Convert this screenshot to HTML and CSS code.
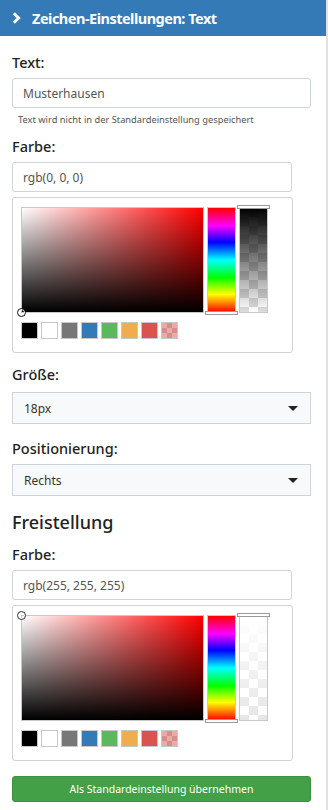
FILE: index.html
```html
<!DOCTYPE html>
<html lang="de">
<head>
    <meta charset="UTF-8">
    <meta name="viewport" content="width=device-width, initial-scale=1.0">
    <title>Zeichen-Einstellungen</title>
    <link rel="stylesheet" href="styles.css">
</head>
<body>
    <div class="panel">
        <div class="panel-head">
            <svg class="chevron" width="9" height="12" viewBox="0 0 9 12">
                <path d="M1.8 1.2 L6.6 6 L1.8 10.8" fill="none" stroke="#fff" stroke-width="3"/>
            </svg>
            <span>Zeichen-Einstellungen: Text</span>
        </div>

        <div class="panel-body">
            <label class="label first">Text:</label>
            <input class="field" type="text" value="Musterhausen">
            <div class="help">Text wird nicht in der Standardeinstellung gespeichert</div>

            <label class="label">Farbe:</label>
            <input class="field short" type="text" value="rgb(0, 0, 0)">
            <div class="picker">
                <div class="picker-main">
                    <div class="sat">
                        <span class="dot dot-bottom"></span>
                    </div>
                    <div class="hue"><span class="hue-handle"></span></div>
                    <div class="alpha alpha-black"><span class="alpha-handle"></span></div>
                </div>
                <div class="swatches">
                    <span class="sw sw-black"></span>
                    <span class="sw sw-white"></span>
                    <span class="sw sw-gray"></span>
                    <span class="sw sw-blue"></span>
                    <span class="sw sw-green"></span>
                    <span class="sw sw-orange"></span>
                    <span class="sw sw-red"></span>
                    <span class="sw sw-clear"></span>
                </div>
            </div>

            <label class="label after-box">Größe:</label>
            <div class="select"><span>18px</span><i class="caret"></i></div>

            <label class="label after-select">Positionierung:</label>
            <div class="select"><span>Rechts</span><i class="caret"></i></div>

            <h3 class="section">Freistellung</h3>

            <label class="label">Farbe:</label>
            <input class="field short" type="text" value="rgb(255, 255, 255)">
            <div class="picker">
                <div class="picker-main">
                    <div class="sat">
                        <span class="dot dot-top"></span>
                    </div>
                    <div class="hue"><span class="hue-handle"></span></div>
                    <div class="alpha alpha-white"><span class="alpha-handle"></span></div>
                </div>
                <div class="swatches">
                    <span class="sw sw-black"></span>
                    <span class="sw sw-white"></span>
                    <span class="sw sw-gray"></span>
                    <span class="sw sw-blue"></span>
                    <span class="sw sw-green"></span>
                    <span class="sw sw-orange"></span>
                    <span class="sw sw-red"></span>
                    <span class="sw sw-clear"></span>
                </div>
            </div>

            <button class="btn-save">Als Standardeinstellung übernehmen</button>
        </div>
    </div>
</body>
</html>
```

FILE: styles.css
```css
body {
    margin: 0;
    font-family: "Noto Sans", "Open Sans", sans-serif;
    color: #222;
    background: #fff;
}

.panel {
    width: 326px;
    min-height: 810px;
    border-right: 2px solid #e2e2e2;
}

.panel-head {
    height: 36px;
    background: #337ab7;
    color: #fff;
    display: flex;
    align-items: center;
    padding-left: 12px;
    font-size: 14.5px;
    font-weight: 700;
    letter-spacing: -0.5px;
}

.chevron {
    margin-right: 11px;
}

.panel-body {
    display: flex;
    flex-direction: column;
    align-items: flex-start;
    padding: 0 15px 0 12px;
}

.label {
    font-size: 14.5px;
    line-height: 22px;
    margin-top: 10px;
    margin-bottom: 5px;
    font-weight: 500;
}

.label.first {
    margin-top: 15px;
}

.label.after-box {
    margin-bottom: 7px;
}

.label.after-select {
    margin-top: 13px;
}

.field {
    box-sizing: border-box;
    width: 299px;
    height: 30px;
    border: 1px solid #ced4da;
    border-radius: 3px;
    padding: 0 10px;
    font-family: inherit;
    font-size: 12px;
    color: #555;
    outline: none;
}

.field.short {
    width: 280px;
}

.help {
    font-size: 9.3px;
    color: #555;
    margin: 6px 0 0 6px;
    line-height: 11px;
}

.picker {
    box-sizing: border-box;
    width: 281px;
    margin-top: 5px;
    border: 1px solid #d2d2d2;
    border-radius: 3px;
    padding: 9px 0 13px 8px;
}

.picker-main {
    display: flex;
    align-items: flex-start;
}

.sat {
    position: relative;
    width: 181px;
    height: 104px;
    border: 1px solid #c8c8c8;
    background:
        linear-gradient(to top, #000, rgba(0, 0, 0, 0)),
        linear-gradient(to right, #fff, #f00);
}

.dot {
    position: absolute;
    box-sizing: border-box;
    width: 9px;
    height: 9px;
    border: 1.5px solid #222;
    border-radius: 50%;
    box-shadow: inset 0 0 0 1px #fff;
}

.dot-bottom {
    left: -5px;
    bottom: -5px;
    border-color: #111;
}

.dot-top {
    left: -5px;
    top: -5px;
    border-color: #333;
}

.hue {
    position: relative;
    width: 27px;
    height: 104px;
    margin-left: 3px;
    border: 1px solid #c8c8c8;
    background: linear-gradient(to bottom,
        #f00 0%, #f0f 17%, #00f 33%, #0ff 50%, #0f0 67%, #ff0 83%, #f00 100%);
}

.hue-handle {
    position: absolute;
    left: -3px;
    right: -3px;
    bottom: -3px;
    height: 2px;
    border: 1px solid #999;
    background: #fff;
}

.alpha {
    position: relative;
    width: 27px;
    height: 104px;
    margin-left: 3px;
    border: 1px solid #c8c8c8;
    background-color: #fff;
}

.alpha-black {
    background-image:
        linear-gradient(to bottom, rgba(0, 0, 0, 1), rgba(0, 0, 0, 0)),
        conic-gradient(#ddd 25%, #fff 0 50%, #ddd 0 75%, #fff 0);
    background-size: 100% 100%, 18px 18px;
}

.alpha-white {
    background-image:
        linear-gradient(to bottom, rgba(255, 255, 255, 1), rgba(255, 255, 255, 0)),
        conic-gradient(#e6e6e6 25%, #fff 0 50%, #e6e6e6 0 75%, #fff 0);
    background-size: 100% 100%, 18px 18px;
}

.alpha-handle {
    position: absolute;
    left: -3px;
    right: -3px;
    top: -3px;
    height: 2px;
    border: 1px solid #999;
    background: #fff;
}

.swatches {
    display: flex;
    gap: 3px;
    margin-top: 9px;
}

.sw {
    box-sizing: border-box;
    width: 17px;
    height: 17px;
    border: 1px solid #c8c8c8;
}

.sw-black { background: #000; }
.sw-white { background: #fff; }
.sw-gray { background: #777; }
.sw-blue { background: #337ab7; }
.sw-green { background: #5cb85c; }
.sw-orange { background: #f0ad4e; }
.sw-red { background: #d9534f; }

.sw-clear {
    background-color: #fff;
    background-image:
        linear-gradient(rgba(217, 83, 79, 0.5), rgba(217, 83, 79, 0.5)),
        conic-gradient(#ccc 25%, #fff 0 50%, #ccc 0 75%, #fff 0);
    background-size: 100% 100%, 10px 10px;
}

.select {
    box-sizing: border-box;
    width: 299px;
    height: 32px;
    display: flex;
    align-items: center;
    justify-content: space-between;
    padding: 0 12px 0 11px;
    border: 1px solid #ced4da;
    background: #f8f9fa;
    font-size: 12px;
    color: #333;
}

.caret {
    width: 0;
    height: 0;
    border-left: 5px solid transparent;
    border-right: 5px solid transparent;
    border-top: 5px solid #222;
}

.section {
    margin: 13px 0 0 0;
    font-size: 18px;
    font-weight: 500;
    line-height: 26px;
}

.section + .label {
    margin-top: 8px;
}

.btn-save {
    width: 299px;
    height: 26px;
    margin-top: 15px;
    border: 1px solid #3b8f3e;
    border-radius: 3px;
    background: #43a047;
    color: #fff;
    font-family: inherit;
    font-size: 10.5px;
    cursor: pointer;
}
```
